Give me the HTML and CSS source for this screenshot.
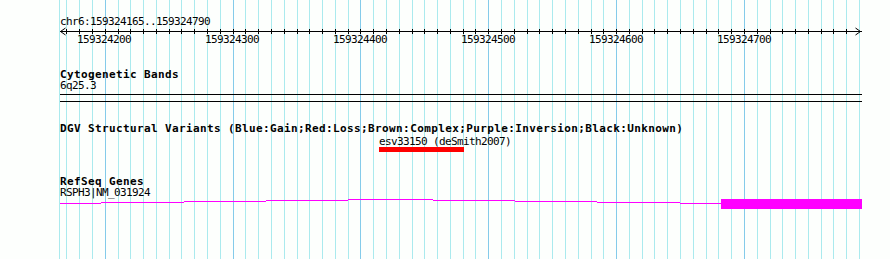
FILE: index.html
```html
<!DOCTYPE html>
<html>
<head>
  <title>Details</title>
  <link rel="stylesheet" href="styles.css">
</head>
<body>

<div class="panel">
  <svg class="grid" id="grid" width="890" height="259"></svg>

  <div class="tracks">
    <svg class="ruler" width="890" height="46">
      <text class="small" x="60" y="25">chr6:159324165..159324790</text>
      <rect x="60" y="31" width="802" height="1"></rect>
      <path class="arrow" d="M65.5,28 L60.5,31.5 L65.5,35"></path>
      <path class="arrow" d="M855.5,28 L860.5,31.5 L855.5,35"></path>
      <g id="ticks"></g>
      <text class="small" x="77" y="43">159324200</text>
      <text class="small" x="205" y="43">159324300</text>
      <text class="small" x="333" y="43">159324400</text>
      <text class="small" x="461" y="43">159324500</text>
      <text class="small" x="589" y="43">159324600</text>
      <text class="small" x="717" y="43">159324700</text>
    </svg>

    <div class="track cyto">
      <div class="title">Cytogenetic Bands</div>
      <div class="label">6q25.3</div>
      <div class="band"></div>
    </div>

    <div class="track dgv">
      <div class="title">DGV Structural Variants (Blue:Gain;Red:Loss;Brown:Complex;Purple:Inversion;Black:Unknown)</div>
      <div class="sv">
        <div class="label">esv33150 (deSmith2007)</div>
        <div class="bar"></div>
      </div>
    </div>

    <div class="track refseq">
      <div class="title">RefSeq Genes</div>
      <div class="label">RSPH3|NM_031924</div>
      <svg class="gene" width="802" height="10">
        <rect x="0" y="4" width="41" height="1"></rect>
        <rect x="41" y="3" width="83" height="1"></rect>
        <rect x="124" y="2" width="82" height="1"></rect>
        <rect x="206" y="1" width="82" height="1"></rect>
        <rect x="288" y="0" width="85" height="1"></rect>
        <rect x="373" y="1" width="82" height="1"></rect>
        <rect x="455" y="2" width="82" height="1"></rect>
        <rect x="537" y="3" width="83" height="1"></rect>
        <rect x="620" y="4" width="41" height="1"></rect>
        <rect x="661" y="0" width="141" height="10"></rect>
      </svg>
    </div>
  </div>
</div>

<script>
  // grid lines and ruler ticks every 10 bp
  const start = 159324165, end = 159324790;
  const scale = 799 / (end - start);
  const ns = "http://www.w3.org/2000/svg";
  const grid = document.getElementById("grid");
  const ticks = document.getElementById("ticks");

  function line(parent, x, y, h, cls) {
    const r = document.createElementNS(ns, "rect");
    r.setAttribute("x", x);
    r.setAttribute("y", y);
    r.setAttribute("width", 1);
    r.setAttribute("height", h);
    if (cls) r.setAttribute("class", cls);
    parent.appendChild(r);
  }

  line(grid, 59, 0, 259, "minor");
  for (let bp = 159324170; bp <= end; bp += 10) {
    const x = 60 + Math.round((bp - start) * scale);
    line(grid, x, 0, 259, bp % 100 === 0 ? "major" : "minor");
    if (bp < end) line(ticks, x, 29, 5);
  }
</script>

</body>
</html>
```

FILE: styles.css
```css
body { margin: 0; background: #fdfffd; font-family: "DejaVu Sans Mono", monospace; color: #000; }
.panel { position: relative; width: 890px; height: 259px; overflow: hidden; }
.grid { position: absolute; left: 0; top: 0; shape-rendering: crispEdges; }
.grid .minor { fill: #aaeaee; }
.grid .major { fill: #84cbea; }
.tracks { position: relative; }

.ruler { display: block; shape-rendering: crispEdges; }
.ruler .arrow { fill: none; stroke: #000; stroke-width: 1; shape-rendering: auto; }
.small { font-size: 11px; letter-spacing: -0.62px; }

.track { padding-left: 60px; }
.title { font-size: 11px; font-weight: bold; letter-spacing: 0.38px; line-height: 11px; white-space: nowrap; }
.label { font-size: 11px; letter-spacing: -0.62px; line-height: 11px; white-space: nowrap; }

.cyto { margin-top: 23px; }
.band { width: 802px; height: 8px; box-sizing: border-box; margin-top: 3px; border-top: 1px solid #000; border-bottom: 1px solid #000; }

.dgv { margin-top: 21px; }
.sv { margin-left: 319px; margin-top: 2px; }
.sv .bar { width: 85px; height: 5px; background: #ff0000; }

.refseq { margin-top: 24px; }
.gene { display: block; margin-top: 1px; fill: #ff00ff; shape-rendering: crispEdges; }
```
